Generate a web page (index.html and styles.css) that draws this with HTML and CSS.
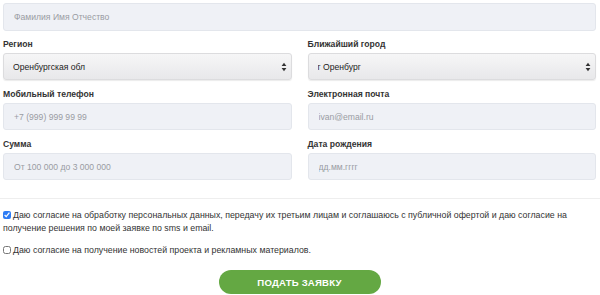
FILE: index.html
```html
<!DOCTYPE html>
<html lang="ru">
<head>
    <meta charset="UTF-8">
    <meta name="viewport" content="width=device-width, initial-scale=1.0">
    <title>Заявка</title>
    <link rel="stylesheet" href="styles.css">
</head>
<body>
    <form class="form">
        <!-- ФИО -->
        <input class="field field-full" type="text" placeholder="Фамилия Имя Отчество">

        <div class="grid">
            <div class="group">
                <label class="label">Регион</label>
                <div class="select-wrap">
                    <select class="select">
                        <option>Оренбургская обл</option>
                    </select>
                    <svg class="arrows" width="6" height="10" viewBox="0 0 6 10">
                        <path d="M3 0.8 L5.4 4 L0.6 4 Z M3 9.2 L5.4 6 L0.6 6 Z" fill="#333"/>
                    </svg>
                </div>
            </div>
            <div class="group">
                <label class="label">Ближайший город</label>
                <div class="select-wrap">
                    <select class="select">
                        <option>г Оренбург</option>
                    </select>
                    <svg class="arrows" width="6" height="10" viewBox="0 0 6 10">
                        <path d="M3 0.8 L5.4 4 L0.6 4 Z M3 9.2 L5.4 6 L0.6 6 Z" fill="#333"/>
                    </svg>
                </div>
            </div>
            <div class="group">
                <label class="label">Мобильный телефон</label>
                <input class="field" type="text" placeholder="+7 (999) 999 99 99">
            </div>
            <div class="group">
                <label class="label">Электронная почта</label>
                <input class="field" type="text" placeholder="ivan@email.ru">
            </div>
            <div class="group">
                <label class="label">Сумма</label>
                <input class="field" type="text" placeholder="От 100 000 до 3 000 000">
            </div>
            <div class="group">
                <label class="label">Дата рождения</label>
                <input class="field" type="text" placeholder="дд.мм.гггг">
            </div>
        </div>

        <hr class="divider">

        <!-- Согласия -->
        <p class="agree">
            <input class="check" type="checkbox" checked>Даю согласие на обработку персональных данных, передачу их третьим лицам и соглашаюсь с публичной офертой и даю согласие на<br>получение решения по моей заявке по sms и email.
        </p>
        <p class="agree">
            <input class="check" type="checkbox">Даю согласие на получение новостей проекта и рекламных материалов.
        </p>

        <div class="actions">
            <button class="submit" type="button">Подать заявку</button>
        </div>
    </form>
</body>
</html>
```

FILE: styles.css
```css
body {
    font-family: 'Liberation Sans', Arial, sans-serif;
    background: #fff;
    margin: 0;
    padding: 0;
    color: #333;
}
.form {
    padding: 3px 4px 0 3px;
}
.field {
    display: block;
    box-sizing: border-box;
    width: 100%;
    height: 27px;
    padding: 0 10px;
    background: #eff1f6;
    border: 1px solid #e3e6ec;
    border-radius: 3px;
    font-family: inherit;
    font-size: 8.6px;
    color: #333;
    outline: none;
}
.field::placeholder {
    color: #9a9ca3;
}
.field-full {
    height: 28px;
}
.grid {
    display: grid;
    grid-template-columns: 1fr 1fr;
    column-gap: 16px;
    row-gap: 8px;
    margin-top: 7px;
}
.label {
    display: block;
    font-size: 8.6px;
    font-weight: bold;
    line-height: 12px;
    margin-bottom: 3px;
    color: #333;
}
.select-wrap {
    position: relative;
}
.select {
    display: block;
    box-sizing: border-box;
    width: 100%;
    height: 27px;
    padding: 0 9px;
    appearance: none;
    -webkit-appearance: none;
    background: linear-gradient(#f6f6f7, #e8e8ea);
    border: 1px solid #dcdcde;
    border-radius: 3px;
    box-shadow: 0 1px 1px rgba(0, 0, 0, 0.08);
    font-family: inherit;
    font-size: 8.6px;
    color: #222;
    outline: none;
}
.arrows {
    position: absolute;
    right: 5px;
    top: 9px;
}
.divider {
    border: none;
    border-top: 1px solid #eeeeee;
    margin: 18px -4px 0 -3px;
}
.agree {
    margin: 10px 0 0;
    font-size: 8.8px;
    line-height: 13px;
    color: #333;
}
.agree + .agree {
    margin-top: 9px;
}
.check {
    width: 8px;
    height: 8px;
    margin: 0 2px 0 0;
    vertical-align: -1px;
    accent-color: #2d7cf5;
}
.actions {
    display: flex;
    justify-content: center;
    margin-top: 13px;
}
.submit {
    width: 162px;
    height: 24px;
    border: none;
    border-radius: 12px;
    background: #64a843;
    color: #fff;
    font-family: inherit;
    font-size: 9.6px;
    font-weight: bold;
    text-transform: uppercase;
    letter-spacing: 0.2px;
    cursor: pointer;
}
```
